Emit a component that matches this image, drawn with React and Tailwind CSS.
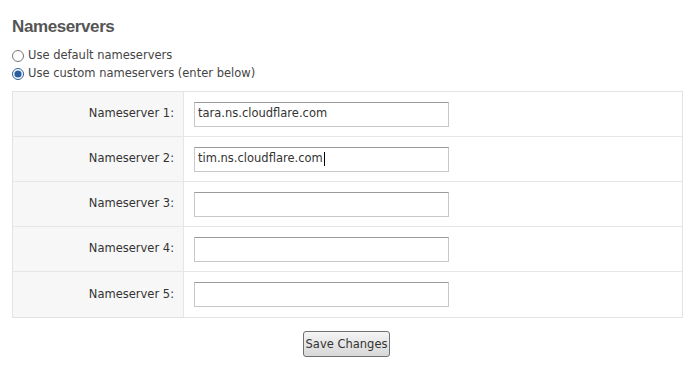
const FONT = { fontFamily: '"DejaVu Sans", Verdana, sans-serif' };
const HEADING_FONT = { fontFamily: '"Liberation Sans", Arial, sans-serif' };

const SERVERS = ['tara.ns.cloudflare.com', 'tim.ns.cloudflare.com', '', '', ''];

function NameserverRow({ index, value, last }) {
  return (
    <div className={`flex h-[45px] ${last ? '' : 'border-b border-[#e6e6e6]'}`}>
      <div className="flex w-[171px] shrink-0 items-center justify-end border-r border-[#e6e6e6] bg-[#f7f7f7] pr-[9px] text-[11.5px] text-[#333]">
        Nameserver {index}:
      </div>
      <div className="flex flex-1 items-center pl-[10px]">
        <div className="flex h-[25px] w-[255px] items-center border border-[#c8c8c8] border-t-[#9a9a9a] bg-white pl-[3px] text-[11.5px] text-[#333]">
          {value}
          {index === 2 && <span className="ml-px inline-block h-[14px] w-px bg-black" />}
        </div>
      </div>
    </div>
  );
}

export default function App() {
  return (
    <div className="h-[371px] w-[693px] bg-white px-3 pt-[17px]" style={FONT}>
      <h2 className="text-[17px] font-bold leading-[20px] tracking-[-0.4px] text-[#555]" style={HEADING_FONT}>
        Nameservers
      </h2>
      <div className="mt-[12px] flex flex-col gap-[5px] text-[11.5px] text-[#444]">
        <label className="flex h-[13px] items-center gap-[4px]">
          <input type="radio" name="ns" className="m-0 h-[12px] w-[12px] accent-[#2a5d9f]" />
          Use default nameservers
        </label>
        <label className="flex h-[13px] items-center gap-[4px]">
          <input type="radio" name="ns" defaultChecked className="m-0 h-[12px] w-[12px] accent-[#2a5d9f]" />
          Use custom nameservers (enter below)
        </label>
      </div>
      <div className="mt-[11px] w-[671px] border border-[#e3e3e3]">
        {SERVERS.map((s, i) => (
          <NameserverRow key={i} index={i + 1} value={s} last={i === SERVERS.length - 1} />
        ))}
      </div>
      <div className="mt-[13px] flex justify-center">
        <button className="h-[26px] w-[87px] whitespace-nowrap rounded-[3px] border border-[#707070] bg-gradient-to-b from-[#f4f4f4] to-[#d8d8d8] px-0 pt-px text-[11.5px] text-[#333]">
          Save Changes
        </button>
      </div>
    </div>
  );
}
